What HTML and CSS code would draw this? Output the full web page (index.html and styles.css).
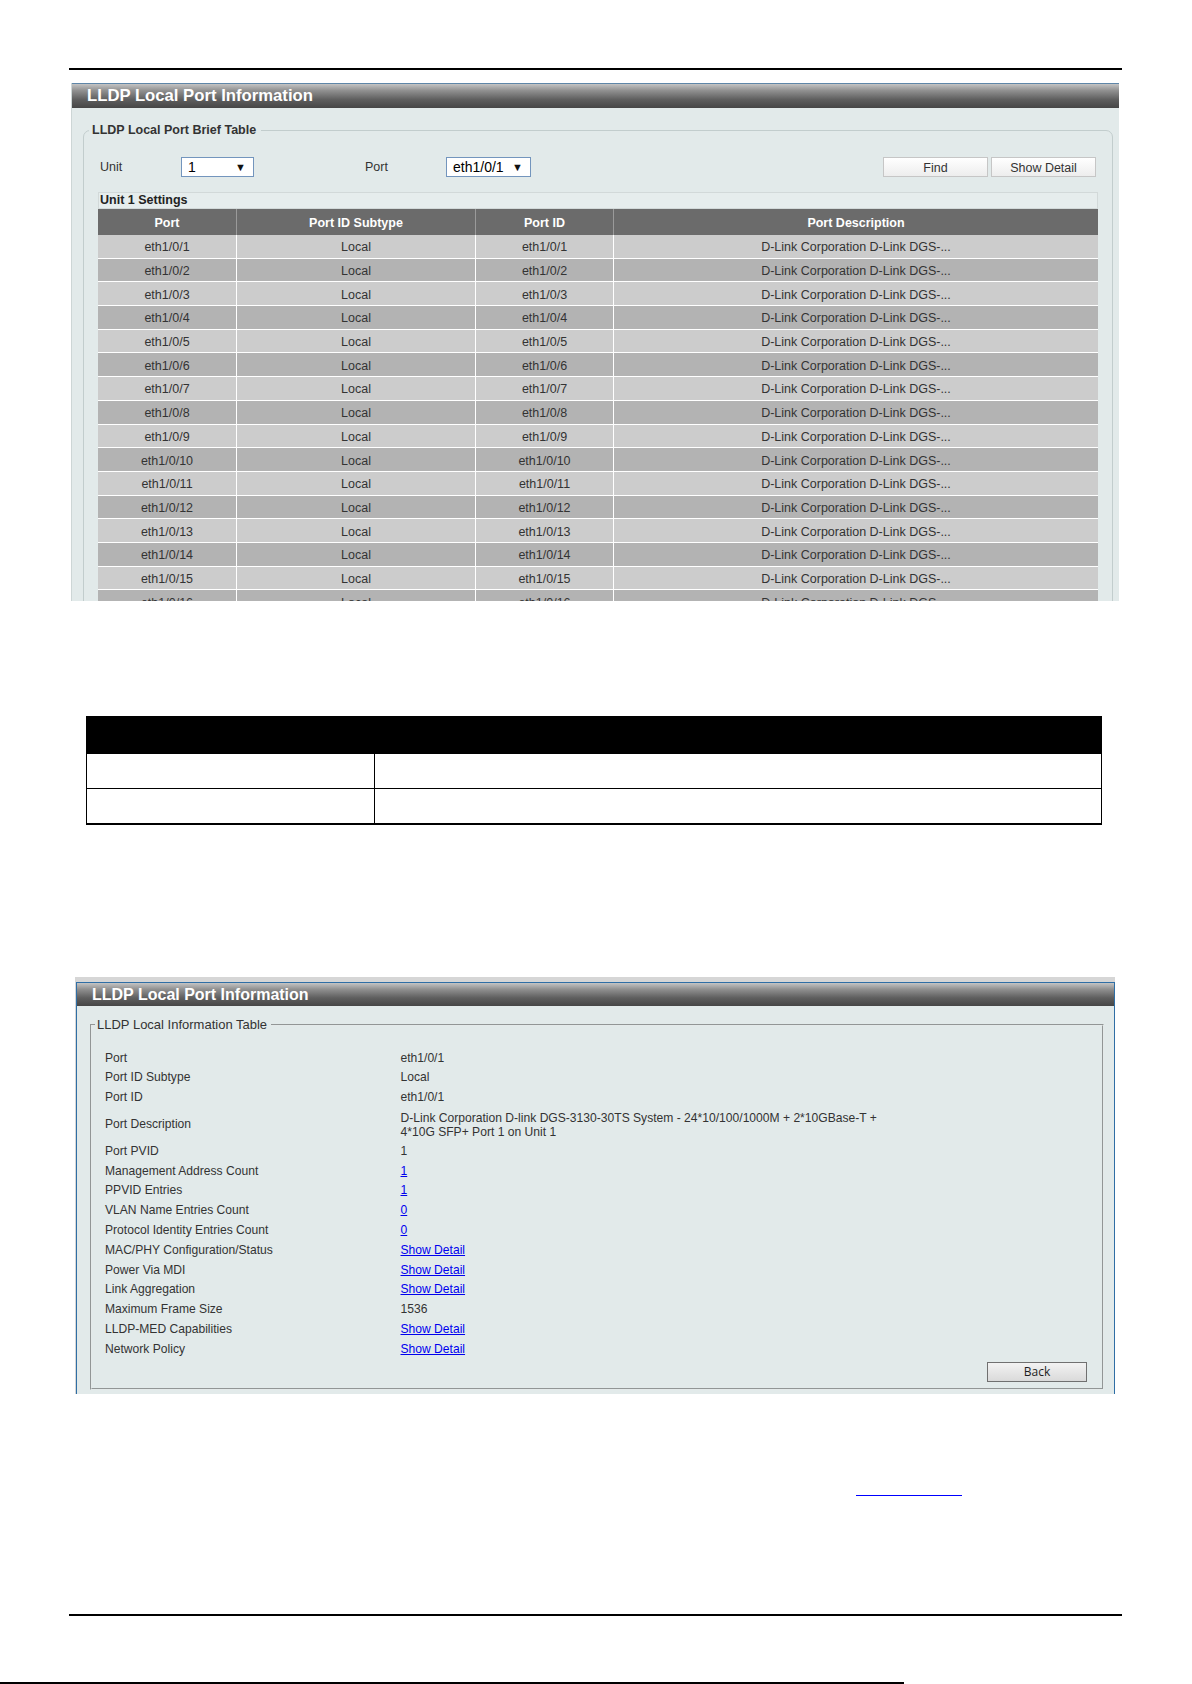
FILE: index.html
```html
<!DOCTYPE html>
<html lang="en">
<head>
<meta charset="utf-8">
<title>LLDP Local Port Information</title>
<link rel="stylesheet" href="styles.css">
</head>
<body>
<div class="sheet">
  <div class="rule"></div>

  <section class="panel-brief">
    <div class="panel-title">LLDP Local Port Information</div>
    <div class="brief-body">
      <fieldset class="brief-group">
        <legend>LLDP Local Port Brief Table</legend>
        <div class="brief-inner">
          <div class="filter-row">
            <span class="field-label unit-label">Unit</span>
            <div class="select unit-select"><span>1</span><span class="arrow">&#9660;</span></div>
            <span class="field-label port-label">Port</span>
            <div class="select port-select"><span>eth1/0/1</span><span class="arrow">&#9660;</span></div>
            <div class="actions">
              <button class="btn" type="button">Find</button>
              <button class="btn" type="button">Show Detail</button>
            </div>
          </div>
          <div class="settings-bar">Unit 1 Settings</div>
          <table class="brief-table">
            <colgroup>
              <col class="c-port"><col class="c-subtype"><col class="c-id"><col class="c-desc">
            </colgroup>
            <thead>
              <tr><th>Port</th><th>Port ID Subtype</th><th>Port ID</th><th>Port Description</th></tr>
            </thead>
            <tbody>
              <tr><td>eth1/0/1</td><td>Local</td><td>eth1/0/1</td><td>D-Link Corporation D-Link DGS-...</td></tr>
              <tr><td>eth1/0/2</td><td>Local</td><td>eth1/0/2</td><td>D-Link Corporation D-Link DGS-...</td></tr>
              <tr><td>eth1/0/3</td><td>Local</td><td>eth1/0/3</td><td>D-Link Corporation D-Link DGS-...</td></tr>
              <tr><td>eth1/0/4</td><td>Local</td><td>eth1/0/4</td><td>D-Link Corporation D-Link DGS-...</td></tr>
              <tr><td>eth1/0/5</td><td>Local</td><td>eth1/0/5</td><td>D-Link Corporation D-Link DGS-...</td></tr>
              <tr><td>eth1/0/6</td><td>Local</td><td>eth1/0/6</td><td>D-Link Corporation D-Link DGS-...</td></tr>
              <tr><td>eth1/0/7</td><td>Local</td><td>eth1/0/7</td><td>D-Link Corporation D-Link DGS-...</td></tr>
              <tr><td>eth1/0/8</td><td>Local</td><td>eth1/0/8</td><td>D-Link Corporation D-Link DGS-...</td></tr>
              <tr><td>eth1/0/9</td><td>Local</td><td>eth1/0/9</td><td>D-Link Corporation D-Link DGS-...</td></tr>
              <tr><td>eth1/0/10</td><td>Local</td><td>eth1/0/10</td><td>D-Link Corporation D-Link DGS-...</td></tr>
              <tr><td>eth1/0/11</td><td>Local</td><td>eth1/0/11</td><td>D-Link Corporation D-Link DGS-...</td></tr>
              <tr><td>eth1/0/12</td><td>Local</td><td>eth1/0/12</td><td>D-Link Corporation D-Link DGS-...</td></tr>
              <tr><td>eth1/0/13</td><td>Local</td><td>eth1/0/13</td><td>D-Link Corporation D-Link DGS-...</td></tr>
              <tr><td>eth1/0/14</td><td>Local</td><td>eth1/0/14</td><td>D-Link Corporation D-Link DGS-...</td></tr>
              <tr><td>eth1/0/15</td><td>Local</td><td>eth1/0/15</td><td>D-Link Corporation D-Link DGS-...</td></tr>
              <tr><td>eth1/0/16</td><td>Local</td><td>eth1/0/16</td><td>D-Link Corporation D-Link DGS-...</td></tr>
              <tr><td>eth1/0/17</td><td>Local</td><td>eth1/0/17</td><td>D-Link Corporation D-Link DGS-...</td></tr>
            </tbody>
          </table>
        </div>
      </fieldset>
    </div>
  </section>

  <table class="param-table">
    <thead>
      <tr><th class="p-name"></th><th class="p-desc"></th></tr>
    </thead>
    <tbody>
      <tr><td></td><td></td></tr>
      <tr><td></td><td></td></tr>
    </tbody>
  </table>

  <section class="panel-detail">
    <div class="detail-frame">
      <div class="panel-title detail-title">LLDP Local Port Information</div>
      <div class="detail-body">
        <fieldset class="detail-group">
          <legend>LLDP Local Information Table</legend>
          <div class="info-list">
            <div class="info-row"><span>Port</span><span>eth1/0/1</span></div>
            <div class="info-row"><span>Port ID Subtype</span><span>Local</span></div>
            <div class="info-row"><span>Port ID</span><span>eth1/0/1</span></div>
            <div class="info-row info-row-tall"><span>Port Description</span><span class="multi">D-Link Corporation D-link DGS-3130-30TS System - 24*10/100/1000M + 2*10GBase-T +<br>4*10G SFP+ Port 1 on Unit 1</span></div>
            <div class="info-row"><span>Port PVID</span><span>1</span></div>
            <div class="info-row"><span>Management Address Count</span><span><a href="#">1</a></span></div>
            <div class="info-row"><span>PPVID Entries</span><span><a href="#">1</a></span></div>
            <div class="info-row"><span>VLAN Name Entries Count</span><span><a href="#">0</a></span></div>
            <div class="info-row"><span>Protocol Identity Entries Count</span><span><a href="#">0</a></span></div>
            <div class="info-row"><span>MAC/PHY Configuration/Status</span><span><a href="#">Show Detail</a></span></div>
            <div class="info-row"><span>Power Via MDI</span><span><a href="#">Show Detail</a></span></div>
            <div class="info-row"><span>Link Aggregation</span><span><a href="#">Show Detail</a></span></div>
            <div class="info-row"><span>Maximum Frame Size</span><span>1536</span></div>
            <div class="info-row"><span>LLDP-MED Capabilities</span><span><a href="#">Show Detail</a></span></div>
            <div class="info-row"><span>Network Policy</span><span><a href="#">Show Detail</a></span></div>
          </div>
          <div class="back-row">
            <button class="btn-back" type="button">Back</button>
          </div>
        </fieldset>
      </div>
    </div>
  </section>

  <div class="note">
    <a class="ref-link" href="#"></a>
  </div>

  <div class="rule rule-bottom"></div>
</div>
<div class="page-edge"></div>
</body>
</html>
```

FILE: styles.css
```css
* {
  box-sizing: border-box;
}

body {
  margin: 0;
  background: #fff;
  font-family: "Liberation Sans", Arial, sans-serif;
  color: #333;
}

.sheet {
  width: 1053px;
  margin-left: 69px;
  padding-top: 68px;
}

.rule {
  height: 2px;
  background: #000;
}

/* ---------- shared title bar ---------- */
.panel-title {
  height: 25px;
  border-top: 1px solid #5f86a8;
  background: linear-gradient(to bottom, #c4c4c4 0%, #8f8f8f 28%, #5e5e5e 65%, #464646 100%);
  color: #fff;
  font-weight: bold;
  font-size: 16.7px;
  line-height: 24px;
  padding-left: 15px;
  white-space: nowrap;
}

/* ---------- brief table panel ---------- */
.panel-brief {
  margin-top: 13px;
  margin-left: 2px;
  width: 1048px;
  height: 518px;
  overflow: hidden;
  background: #e2eaea;
  border-left: 1px solid #cdd6d6;
}

.brief-body {
  padding: 14px 6px 0 11px;
}

.brief-group {
  margin: 0;
  min-width: 0;
  border: 1px solid #c2cdcd;
  border-radius: 7px;
  padding: 0 5px 40px;
}

.brief-group legend {
  padding: 0 5px 0 3px;
  font-weight: bold;
  font-size: 12.5px;
  line-height: 16px;
  color: #333;
}

.brief-inner {
  padding: 0 9px;
}

.filter-row {
  display: flex;
  align-items: center;
  height: 20px;
  margin-top: 19px;
}

.field-label {
  font-size: 12.5px;
  color: #333;
}

.unit-label {
  width: 83px;
  padding-left: 2px;
}

.port-label {
  width: 81px;
  margin-left: 111px;
}

.select {
  height: 20px;
  border: 1px solid #7395bd;
  background: #fff;
  display: flex;
  align-items: center;
  justify-content: space-between;
  padding: 0 7px 0 6px;
  font-size: 14px;
  color: #000;
}

.select .arrow {
  font-size: 11px;
  color: #111;
}

.unit-select {
  width: 73px;
}

.port-select {
  width: 85px;
}

.actions {
  margin-left: auto;
  margin-right: 2px;
  display: flex;
  gap: 3px;
}

.btn {
  width: 105px;
  height: 20px;
  border: 1px solid #c6c6c6;
  background: linear-gradient(to bottom, #ffffff, #ededed);
  font-family: "Liberation Sans", Arial, sans-serif;
  font-size: 12.5px;
  color: #333;
  padding: 1px 0 0;
}

.settings-bar {
  margin-top: 15px;
  height: 17px;
  border: 1px solid #d2d9d9;
  background: #e6eded;
  font-weight: bold;
  font-size: 12.5px;
  line-height: 15px;
  color: #222;
  padding-left: 1px;
}

.brief-table {
  width: 1000px;
  table-layout: fixed;
  border-collapse: separate;
  border-spacing: 0;
  font-size: 12.5px;
}

.c-port { width: 139px; }
.c-subtype { width: 239px; }
.c-id { width: 138px; }
.c-desc { width: 484px; }

.brief-table th {
  height: 26px;
  background: #6b6b6b;
  color: #fff;
  font-weight: bold;
  text-align: center;
  padding: 1px 0 0;
  border-right: 1px solid #9a9a9a;
}

.brief-table td {
  height: 23.7px;
  padding: 2px 0 0;
  text-align: center;
  color: #333;
  border-right: 1px solid #fff;
  border-bottom: 1px solid #fff;
  white-space: nowrap;
}

.brief-table th:last-child,
.brief-table td:last-child {
  border-right: none;
}

.brief-table tbody tr:nth-child(odd) td {
  background: #cccccc;
}

.brief-table tbody tr:nth-child(even) td {
  background: #b3b3b3;
}

/* ---------- parameter table ---------- */
.param-table {
  margin-top: 115px;
  margin-left: 17px;
  width: 1016px;
  border-collapse: collapse;
  table-layout: fixed;
}

.param-table th {
  height: 37px;
  background: #000;
  border: 1px solid #000;
  padding: 0;
}

.param-table .p-name {
  width: 288px;
}

.param-table td {
  height: 35px;
  border: 1px solid #000;
  padding: 0;
}

.param-table tbody tr:last-child td {
  border-bottom-width: 2px;
}

/* ---------- detail panel ---------- */
.panel-detail {
  margin-top: 152px;
  margin-left: 6px;
  width: 1040px;
  background: #d6d6d6;
  padding: 5px 0 0 1px;
}

.detail-frame {
  border: 1px solid #2f6ea5;
  border-bottom: none;
}

.detail-title {
  height: 23px;
  border-top: none;
  font-size: 16px;
  line-height: 23px;
  padding-left: 15px;
}

.detail-body {
  background: #e2eaea;
  padding: 11px 10px 4px 13px;
}

.detail-group {
  margin: 0;
  min-width: 0;
  border: 2px groove #e4eaea;
  padding: 0 3px 6px;
}

.detail-group legend {
  padding: 0 4px 0 2px;
  font-size: 13px;
  line-height: 16px;
  color: #333;
}

.info-list {
  margin-top: 16px;
  padding-left: 10px;
  font-size: 12.1px;
  color: #333;
}

.info-row {
  display: grid;
  grid-template-columns: 295.5px 1fr;
  align-items: center;
  height: 19.8px;
  line-height: 19.8px;
}

.info-row-tall {
  height: 34px;
}

.info-row .multi {
  line-height: 14.3px;
}

.info-row a {
  color: #0000ee;
  text-decoration: underline;
}

.back-row {
  display: flex;
  justify-content: flex-end;
  margin-top: 2px;
  padding-right: 12px;
}

.btn-back {
  width: 100px;
  height: 20px;
  border: 1px solid #707070;
  background: linear-gradient(to bottom, #f2f2f2, #dadada);
  font-family: "Open Sans", "DejaVu Sans", sans-serif;
  font-size: 12px;
  color: #1e1e1e;
  padding: 0;
  line-height: 18px;
}

/* ---------- trailing note and page rules ---------- */
.note {
  margin-top: 101px;
  height: 1px;
}

.ref-link {
  display: block;
  margin-left: 787px;
  width: 106px;
  height: 1px;
  background: #0000ff;
}

.rule-bottom {
  margin-top: 118px;
}

.page-edge {
  margin-top: 66px;
  width: 904px;
  height: 2px;
  background: #000;
}
```
